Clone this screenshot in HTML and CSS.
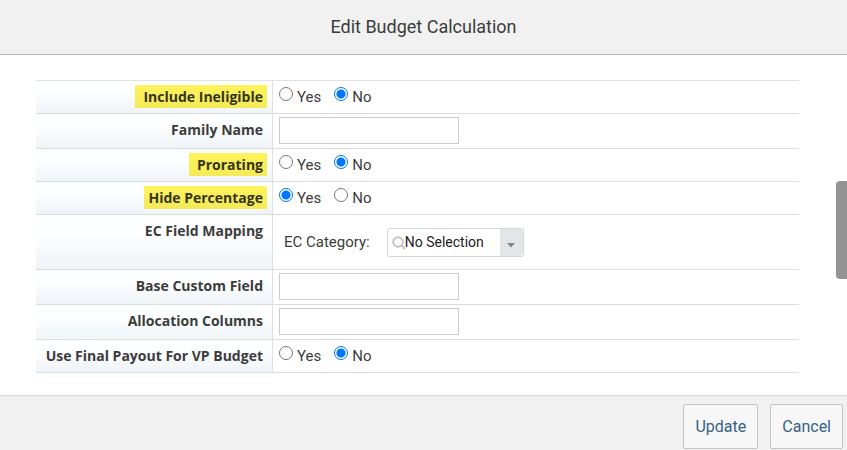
FILE: index.html
```html
<!DOCTYPE html>
<html lang="en">
<head>
<meta charset="utf-8">
<title>Edit Budget Calculation</title>
<link rel="stylesheet" href="styles.css">
</head>
<body>
<form class="dialog">
  <header class="dialog-header"><h1>Edit Budget Calculation</h1></header>
  <main class="dialog-body">
    <div class="fields">
      <div class="row" role="radiogroup" aria-labelledby="l-ineligible">
        <div class="label"><span class="mark wide" id="l-ineligible">Include Ineligible</span></div>
        <div class="value radios">
          <label><input type="radio" name="ineligible">Yes</label>
          <label><input type="radio" name="ineligible" checked>No</label>
        </div>
      </div>
      <div class="row">
        <label class="label" for="family">Family Name</label>
        <div class="value"><input class="text" type="text" id="family"></div>
      </div>
      <div class="row" role="radiogroup" aria-labelledby="l-prorating">
        <div class="label"><span class="mark wide" id="l-prorating">Prorating</span></div>
        <div class="value radios">
          <label><input type="radio" name="prorating">Yes</label>
          <label><input type="radio" name="prorating" checked>No</label>
        </div>
      </div>
      <div class="row" role="radiogroup" aria-labelledby="l-hide">
        <div class="label"><span class="mark" id="l-hide">Hide Percentage</span></div>
        <div class="value radios">
          <label><input type="radio" name="hide" checked>Yes</label>
          <label><input type="radio" name="hide">No</label>
        </div>
      </div>
      <div class="row">
        <div class="label">EC Field Mapping</div>
        <div class="value mapping">
          <label for="category">EC Category:</label>
          <div class="picker">
            <svg class="search" viewBox="0 0 14 14" aria-hidden="true"><circle cx="6" cy="6" r="4.8"/><path d="M9.4 9.4 13 13"/></svg>
            <select id="category"><option>No Selection</option></select>
            <span class="arrow"><svg viewBox="0 0 10 6" aria-hidden="true"><path d="M1 1h8L5 5.4z"/></svg></span>
          </div>
        </div>
      </div>
      <div class="row">
        <label class="label" for="base">Base Custom Field</label>
        <div class="value"><input class="text" type="text" id="base"></div>
      </div>
      <div class="row">
        <label class="label" for="allocation">Allocation Columns</label>
        <div class="value"><input class="text" type="text" id="allocation"></div>
      </div>
      <div class="row" role="radiogroup" aria-labelledby="l-payout">
        <div class="label" id="l-payout">Use Final Payout For VP Budget</div>
        <div class="value radios">
          <label><input type="radio" name="payout">Yes</label>
          <label><input type="radio" name="payout" checked>No</label>
        </div>
      </div>
    </div>
  </main>
  <footer class="dialog-footer">
    <button type="button">Update</button>
    <button type="button">Cancel</button>
  </footer>
  <div class="scroll-thumb"></div>
</form>
</body>
</html>
```
FILE: styles.css
```css
* { box-sizing: border-box; }

body {
  margin: 0;
  background: #fff;
  color: #3c3c3c;
  font: 15px/23px Roboto, "Liberation Sans", sans-serif;
}

.dialog {
  position: relative;
  display: flex;
  flex-direction: column;
  min-height: 100vh;
}

.dialog-header {
  padding: 15px 0 15px;
  border-bottom: 1px solid #b8b8b8;
  background: #f1f1f1;
  text-align: center;
}

h1 {
  margin: 0;
  font-size: 18px;
  font-weight: 400;
  line-height: 24px;
}

.dialog-body {
  flex: 1;
  padding: 25px 48px 22px 36px;
}

.fields { border-top: 1px solid #e2e2e2; }

.row {
  display: grid;
  grid-template-columns: 237px 1fr;
  border-bottom: 1px solid #dcdcdc;
}

.label {
  padding: 4px 9px 5px 0;
  border-right: 1px solid #dde1e4;
  background: linear-gradient(#fdfeff 35%, #eff4f8);
  color: #3c3c3c;
  font-family: "Open Sans", "Noto Sans", sans-serif;
  font-size: 14px;
  font-weight: 700;
  text-align: right;
}

.mark {
  display: inline-block;
  margin-right: -4px;
  padding: 0 4px;
  background: linear-gradient(#fff35a, #f3ea58);
  color: #35351c;
  vertical-align: top;
}

.mark.wide { padding-left: 8px; }

.value { padding: 3px 6px 4px; }

.radios {
  display: flex;
  gap: 13px;
  padding-top: 5px;
  padding-bottom: 4px;
}

.radios label {
  display: flex;
  align-items: flex-start;
  gap: 4px;
}

.radios input {
  appearance: none;
  width: 14px;
  height: 14px;
  margin: 1px 0 0;
  border: 1px solid #777;
  border-radius: 50%;
  background: #fff;
}

.radios input:checked {
  border-color: #0075ff;
  background: radial-gradient(circle, #0075ff 4px, #fff 5px);
}

.text {
  display: block;
  width: 180px;
  height: 27px;
  border: 1px solid #ccc;
  background: #fff;
}

.mapping {
  display: flex;
  align-items: center;
  gap: 17px;
  min-height: 54px;
  padding: 0 11px;
}

.picker {
  position: relative;
  display: flex;
}

.picker select {
  appearance: none;
  width: 137px;
  height: 29px;
  padding: 0 24px 0 17px;
  border: 1px solid #d3dadf;
  border-radius: 2px;
  background: #fff;
  color: #222;
  font: 14px Roboto, "Liberation Sans", sans-serif;
}

.search {
  position: absolute;
  top: 8px;
  left: 5px;
  width: 14px;
  height: 14px;
  fill: none;
  stroke: #c4c4c4;
  stroke-width: 2;
}

.arrow {
  position: absolute;
  inset: 1px 1px 1px auto;
  display: grid;
  place-items: center;
  width: 23px;
  padding-top: 5px;
  border-radius: 0 4px 4px 0;
  background: #e3e5e7;
  pointer-events: none;
}

.arrow svg {
  width: 10px;
  height: 6px;
  fill: #858585;
}

.dialog-footer {
  display: flex;
  justify-content: flex-end;
  gap: 12px;
  padding: 8px 4px 1px;
  border-top: 1px solid #d6d6d6;
  background: #f1f1f1;
}

.dialog-footer button {
  height: 45px;
  padding: 0 11px;
  border: 1px solid #c4c4c4;
  border-radius: 2px;
  background: #f7f7f7;
  color: #346187;
  font: 16px Roboto, "Liberation Sans", sans-serif;
}

.scroll-thumb {
  position: absolute;
  top: 181px;
  right: 0;
  width: 11px;
  height: 98px;
  border-radius: 4px 0 0 4px;
  background: #949494;
}
```
